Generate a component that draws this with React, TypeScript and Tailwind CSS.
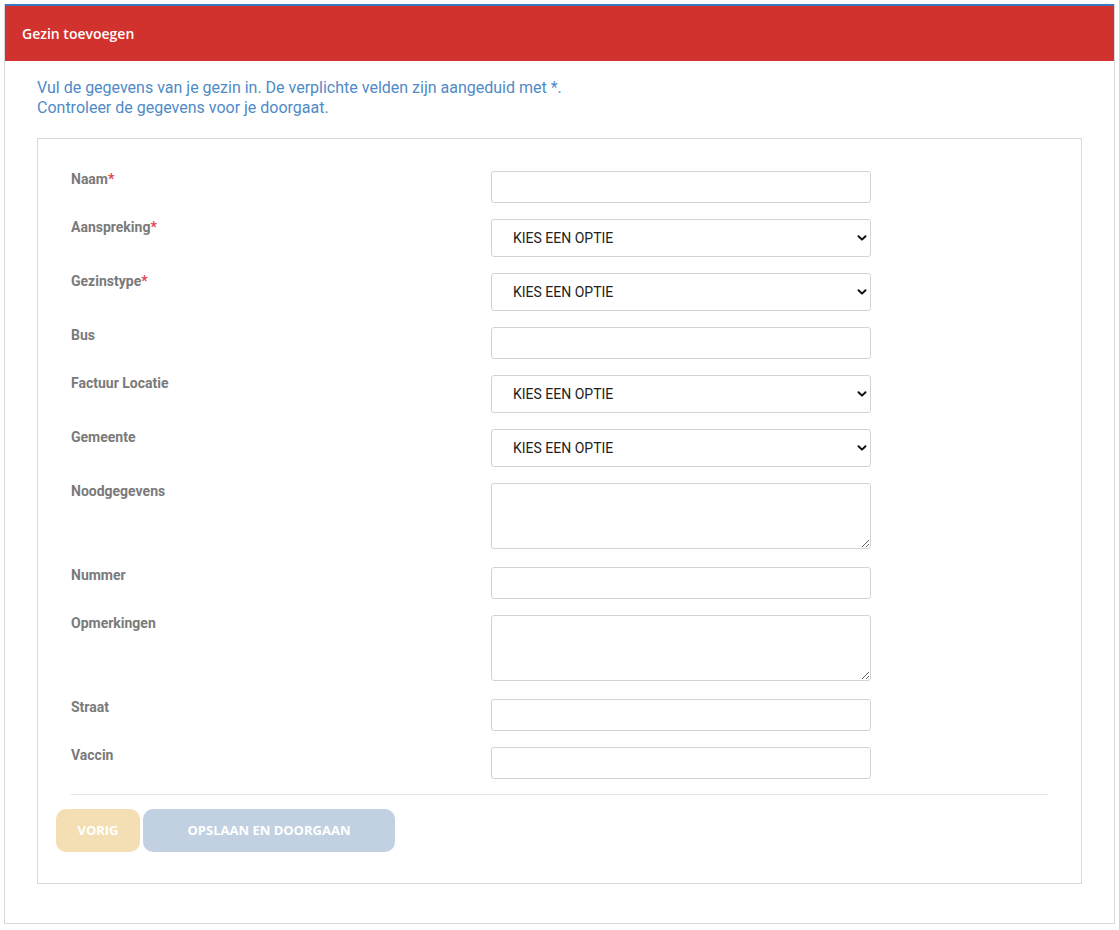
import type { ReactNode } from 'react';

const fieldBase =
  'w-[380px] border border-[#cfd4da] rounded-[3px] bg-white text-[14px] text-[#222] outline-none';

function Chevron() {
  return (
    <svg width="10" height="10" viewBox="0 0 10 10" className="pointer-events-none absolute right-[4px] top-1/2 -translate-y-1/2">
      <path d="M1.5 3.2 L5 6.6 L8.5 3.2" fill="none" stroke="#111" strokeWidth="2" strokeLinecap="round" strokeLinejoin="round" />
    </svg>
  );
}

function Row({ label, required, tall, children }: { label: string; required?: boolean; tall?: boolean; children: ReactNode }) {
  return (
    <div className={`flex ${tall ? 'mb-[18px]' : 'mb-4'}`}>
      <div className="w-[420px] shrink-0 mt-[-1px] text-[14px] font-bold text-[#7a7a7a] leading-[18px]">
        {label}
        {required && <span className="text-[#e0474c]">*</span>}
      </div>
      {children}
    </div>
  );
}

function TextInput() {
  return <input type="text" className={`${fieldBase} h-[32px] px-3`} />;
}

function SelectInput() {
  return (
    <div className="relative w-[380px]">
      <select className={`${fieldBase} h-[38px] pl-[21px] appearance-none`} defaultValue="">
        <option value="">KIES EEN OPTIE</option>
      </select>
      <Chevron />
    </div>
  );
}

function TextArea() {
  return <textarea className={`${fieldBase} h-[66px] px-3 py-2 block`} />;
}

export default function App() {
  return (
    <div className="min-h-[930px] bg-white pt-[4px] px-[4px]" style={{ fontFamily: 'Roboto, "Liberation Sans", sans-serif' }}>
      <div className="border border-[#d6d9de] border-t-0 bg-white">
        <div className="h-[2px] bg-[#3a78bd]" />
        <div className="h-[55px] bg-[#d2322e] flex items-center px-[17px]">
          <span className="text-white text-[14px] font-semibold" style={{ fontFamily: '"Open Sans", sans-serif' }}>
            Gezin toevoegen
          </span>
        </div>
        <div className="px-[32px] pt-[17px] pb-[39px]">
          <p className="text-[16px] leading-[20px] text-[#4f8ac8]">
            Vul de gegevens van je gezin in. De verplichte velden zijn aangeduid met *.
            <br />
            Controleer de gegevens voor je doorgaat.
          </p>
          <div className="mt-[20px] border border-[#d6d9de] pt-[32px] pb-[31px]">
            <div className="px-[33px]">
              <Row label="Naam" required><TextInput /></Row>
              <Row label="Aanspreking" required><SelectInput /></Row>
              <Row label="Gezinstype" required><SelectInput /></Row>
              <Row label="Bus"><TextInput /></Row>
              <Row label="Factuur Locatie"><SelectInput /></Row>
              <Row label="Gemeente"><SelectInput /></Row>
              <Row label="Noodgegevens" tall><TextArea /></Row>
              <Row label="Nummer"><TextInput /></Row>
              <Row label="Opmerkingen" tall><TextArea /></Row>
              <Row label="Straat"><TextInput /></Row>
              <Row label="Vaccin"><TextInput /></Row>
              <div className="border-t border-[#dfe2e6] mt-[-1px]" />
            </div>
            <div className="flex gap-[3px] px-[18px] mt-[14px]" style={{ fontFamily: '"Open Sans", sans-serif' }}>
              <button className="h-[43px] w-[84px] rounded-[10px] bg-[#f4dfb4] text-white text-[13px] font-bold">
                VORIG
              </button>
              <button className="h-[43px] w-[252px] rounded-[10px] bg-[#c1d1e1] text-white text-[13px] font-bold">
                OPSLAAN EN DOORGAAN
              </button>
            </div>
          </div>
        </div>
      </div>
    </div>
  );
}
